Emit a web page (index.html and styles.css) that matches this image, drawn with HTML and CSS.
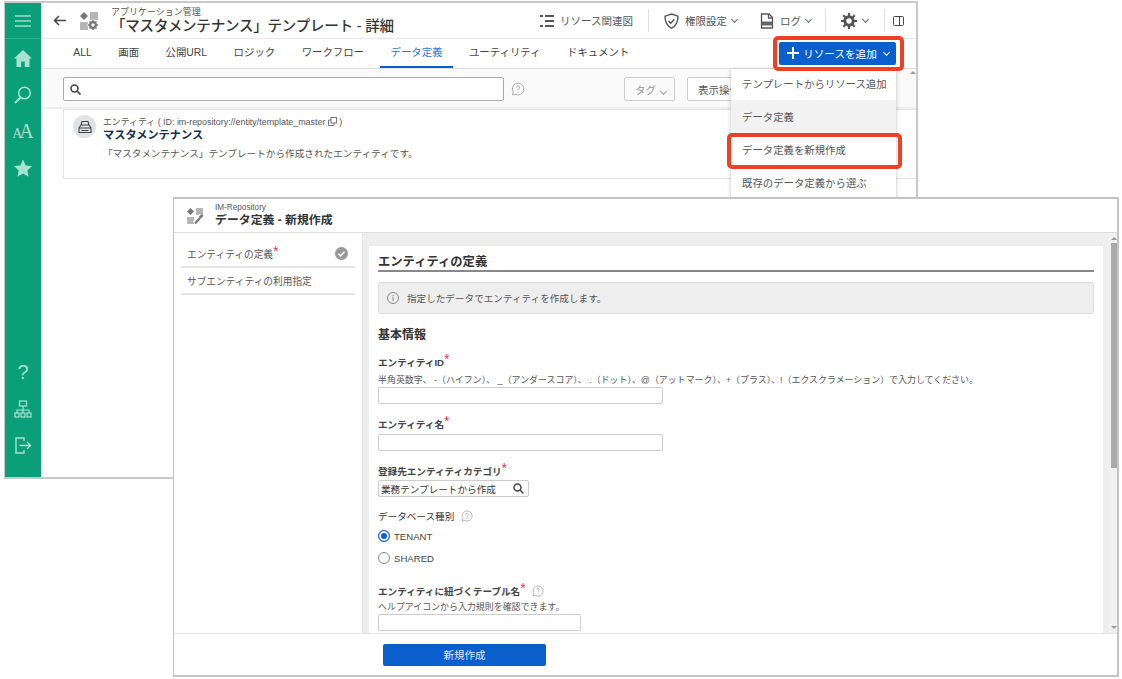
FILE: index.html
```html
<!DOCTYPE html>
<html lang="ja">
<head>
    <meta charset="UTF-8">
    <meta name="viewport" content="width=device-width, initial-scale=1.0">
    <title>データ定義 - 新規作成</title>
    <link rel="stylesheet" href="styles.css">
</head>
<body>
    <!-- 背面のウィンドウ -->
    <div class="window back-window">
        <div class="sidebar">
            <div class="side-top">
                <svg width="18" height="14" viewBox="0 0 18 14"><path d="M1 2h16M1 7h16M1 12h16" stroke="#9fdcc9" stroke-width="1.6"/></svg>
            </div>
            <ul class="side-menu">
                <li><svg width="18" height="17" viewBox="0 0 18 17"><path d="M9 0 0 8.5h2.5V17h4.7v-5.5h3.6V17h4.7V8.5H18z" fill="#a8e2d0"/></svg></li>
                <li><svg width="18" height="18" viewBox="0 0 18 18"><circle cx="10.5" cy="7" r="5.8" fill="none" stroke="#a8e2d0" stroke-width="1.5"/><path d="M6.5 11.5 1 17" stroke="#a8e2d0" stroke-width="2"/></svg></li>
                <li class="side-aa"><span class="aa-text">AA</span></li>
                <li><svg width="18" height="18" viewBox="0 0 18 18"><path d="m9 .5 2.7 5.9 6.3.7-4.7 4.3 1.3 6.3L9 14.5l-5.6 3.2 1.3-6.3L0 7.1l6.3-.7z" fill="#a8e2d0"/></svg></li>
            </ul>
            <ul class="side-menu side-bottom">
                <li class="side-help">?</li>
                <li><svg width="18" height="18" viewBox="0 0 18 18" fill="none" stroke="#a8e2d0" stroke-width="1.2"><rect x="5.5" y="1" width="7" height="5"/><path d="M9 6v4M3 13v-3h12v3M9 10v3"/><rect x="1" y="13" width="4" height="4"/><rect x="7" y="13" width="4" height="4"/><rect x="13" y="13" width="4" height="4"/></svg></li>
                <li><svg width="17" height="17" viewBox="0 0 17 17" fill="none" stroke="#a8e2d0" stroke-width="1.4"><path d="M9 4V1H1v15h8v-3M4.5 8.5h11M12 5l3.500 3.500L12 12"/></svg></li>
            </ul>
        </div>
        <div class="main">
            <div class="app-header">
                <svg class="back-arrow" width="13" height="11" viewBox="0 0 13 11" fill="none" stroke="#444" stroke-width="1.5"><path d="M13 5.5H1.5M6 1 1.5 5.5 6 10"/></svg>
                <svg class="app-icon" width="20" height="20" viewBox="0 0 20 20"><path d="M5 1l4 4-4 4-4-4z" fill="#777"/><rect x="11" y="1" width="8" height="8" fill="#b5b5b5"/><rect x="1" y="11" width="8" height="8" fill="#b5b5b5"/><circle cx="14" cy="14" r="5.5" fill="#fff"/><circle cx="14" cy="14" r="2.8" fill="none" stroke="#777" stroke-width="2.2"/><path d="M14 9v2M14 17v2M9 14h2M17 14h2M10.5 10.5l1.5 1.5M16 16l1.500 1.500M10.5 17.5l1.5-1.5M16 12l1.5-1.5" stroke="#777" stroke-width="1.5"/></svg>
                <div class="app-title">
                    <div class="crumb">アプリケーション管理</div>
                    <h1>「マスタメンテナンス」テンプレート - 詳細</h1>
                </div>
                <div class="tools">
                    <span class="tool tool-first">
                        <svg width="14" height="12" viewBox="0 0 14 12" fill="#555"><path d="M0 0h3v2H0zM0 10h3v2H0zM5 0h9v2H5zM5 5h9v2H5zM5 10h9v2H5z"/></svg>
                        リソース関連図
                    </span>
                    <span class="tool-sep"></span>
                    <span class="tool">
                        <svg width="15" height="16" viewBox="0 0 15 16" fill="none" stroke="#555" stroke-width="1.4"><path d="M7.5 1 14 3.2c0 5.500-1.800 9.600-6.500 12C2.800 12.800 1 8.700 1 3.200z"/><path d="m4.5 8 2.200 2.200 3.800-4"/></svg>
                        権限設定 <i class="chev"></i>
                    </span>
                    <span class="tool tool-log">
                        <svg width="14" height="16" viewBox="0 0 14 16" fill="none" stroke="#555" stroke-width="1.3"><path d="M1.5 15V1h7.500l3.500 3.500V15z"/><path d="M8.5 1v4h4"/><rect x="2" y="8.5" width="10" height="4" fill="#666" stroke="none"/></svg>
                        ログ <i class="chev"></i>
                    </span>
                    <span class="tool-sep"></span>
                    <span class="tool tool-gear">
                        <svg width="16" height="16" viewBox="0 0 16 16"><circle cx="8" cy="8" r="4.2" fill="none" stroke="#555" stroke-width="3"/><path d="M8 0v3M8 13v3M0 8h3M13 8h3M2.3 2.3l2.200 2.200M11.500 11.500l2.200 2.200M2.300 13.700l2.200-2.200M11.500 4.500l2.200-2.200" stroke="#555" stroke-width="2.2"/></svg>
                        <i class="chev"></i>
                    </span>
                    <span class="tool-sep"></span>
                    <svg class="panel-icon" width="11" height="10" viewBox="0 0 11 10" fill="none" stroke="#444"><rect x=".5" y=".5" width="10" height="9" rx="1"/><path d="M6.5 .5v9"/></svg>
                </div>
            </div>
            <div class="tab-bar">
                <ul class="tabs">
                    <li>ALL</li>
                    <li>画面</li>
                    <li>公開URL</li>
                    <li>ロジック</li>
                    <li>ワークフロー</li>
                    <li class="active">データ定義</li>
                    <li>ユーティリティ</li>
                    <li>ドキュメント</li>
                </ul>
                <button class="add-btn">
                    <svg width="12" height="12" viewBox="0 0 12 12"><path d="M6 0v12M0 6h12" stroke="#fff" stroke-width="2"/></svg>
                    リソースを追加
                    <i class="chev chev-white"></i>
                </button>
            </div>
            <div class="filter-bar">
                <div class="search-box">
                    <svg width="11" height="11" viewBox="0 0 11 11" fill="none" stroke="#444" stroke-width="1.6"><circle cx="4.5" cy="4.5" r="3.5"/><path d="m7 7 3.500 3.500"/></svg>
                </div>
                <svg class="help-icon" width="14" height="14" viewBox="0 0 14 14" fill="none" stroke="#aaa"><path d="M7 1a6 6 0 1 1-3 11.200L1.500 13l.8-2.800A6 6 0 0 1 7 1z"/><path d="M5.5 5.500C5.500 3.500 8.500 3.500 8.500 5.500 8.500 6.800 7 6.800 7 8.200M7 9.500v1"/></svg>
                <button class="filter-btn filter-tag">タグ <i class="chev"></i></button>
                <button class="filter-btn">表示操作</button>
            </div>
            <div class="entity-card">
                <div class="entity-avatar">
                    <svg width="14" height="14" viewBox="0 0 14 14" fill="none" stroke="#444" stroke-width="1.1"><path d="M4 1.5h6L11 5H3zM3 5 1 8v4.500h12V8l-2-3M1 8h12M3.500 10.500h7"/></svg>
                </div>
                <div>
                    <div class="entity-meta">エンティティ ( ID: im-repository://entity/template_master <svg width="9" height="9" viewBox="0 0 9 9" fill="none" stroke="#555" stroke-width=".8"><rect x="3" y=".5" width="5.5" height="5.5"/><path d="M3 3H.5v5.500H6V6"/></svg> )</div>
                    <div class="entity-name">マスタメンテナンス</div>
                    <div class="entity-desc">「マスタメンテナンス」テンプレートから作成されたエンティティです。</div>
                </div>
            </div>
        </div>
        <i class="arrow-up back-arrow-up"></i>
        <ul class="add-menu">
            <li>テンプレートからリソース追加</li>
            <li class="menu-group">データ定義</li>
            <li>データ定義を新規作成</li>
            <li>既存のデータ定義から選ぶ</li>
        </ul>
    </div>

    <!-- 前面のウィンドウ -->
    <div class="window front-window">
        <div class="dialog-header">
            <svg width="18" height="18" viewBox="0 0 18 18"><path d="M4.5 1 8 4.500 4.500 8 1 4.500z" fill="#777"/><rect x="10" y="1" width="7" height="7" fill="#b5b5b5"/><rect x="1" y="10" width="7" height="7" fill="#b5b5b5"/><path d="M15.5 8.500 12 12l-3 4.500" stroke="#fff" stroke-width="5" fill="none"/><path d="M16.5 8 15 10l-1.500-1M14 11l-5 5.500" stroke="#777" stroke-width="2.2" fill="none"/></svg>
            <div class="dialog-title">
                <div class="crumb-en">IM-Repository</div>
                <h2>データ定義 - 新規作成</h2>
            </div>
        </div>
        <div class="dialog-body">
            <ul class="step-nav">
                <li class="step-first">
                    <span>エンティティの定義<em class="req">*</em></span>
                    <svg width="13" height="13" viewBox="0 0 13 13"><circle cx="6.5" cy="6.5" r="6.5" fill="#999"/><path d="m3.5 6.800 2.100 2.100 3.900-4.200" fill="none" stroke="#fff" stroke-width="1.5"/></svg>
                </li>
                <li>サブエンティティの利用指定</li>
            </ul>
            <div class="form-area">
                <div class="form-panel">
                    <h3 class="panel-title">エンティティの定義</h3>
                    <div class="info-box">
                        <svg width="12" height="12" viewBox="0 0 12 12" fill="none" stroke="#888"><circle cx="6" cy="6" r="5.5"/><path d="M6 5v4M6 3v1.200"/></svg>
                        指定したデータでエンティティを作成します。
                    </div>
                    <h4 class="section-title">基本情報</h4>

                    <div class="field field-id">
                        <label>エンティティID<em class="req">*</em></label>
                        <p class="hint">半角英数字、 -（ハイフン）、 _（アンダースコア）、 .（ドット）、@（アットマーク）、+（プラス）、!（エクスクラメーション）で入力してください。</p>
                        <div class="input input-wide"></div>
                    </div>
                    <div class="field field-name">
                        <label>エンティティ名<em class="req">*</em></label>
                        <div class="input input-wide"></div>
                    </div>
                    <div class="field field-cat">
                        <label>登録先エンティティカテゴリ<em class="req">*</em></label>
                        <div class="input input-search">
                            <span>業務テンプレートから作成</span>
                            <svg width="11" height="11" viewBox="0 0 11 11" fill="none" stroke="#444" stroke-width="1.5"><circle cx="4.5" cy="4.5" r="3.5"/><path d="m7 7 3.500 3.500"/></svg>
                        </div>
                    </div>
                    <div class="field field-db">
                        <label class="plain">データベース種別 <svg class="help-small" width="12" height="12" viewBox="0 0 14 14" fill="none" stroke="#aaa"><path d="M7 1a6 6 0 1 1-3 11.200L1.500 13l.8-2.800A6 6 0 0 1 7 1z"/><path d="M5.5 5.500C5.500 3.500 8.500 3.500 8.500 5.500 8.500 6.800 7 6.800 7 8.200M7 9.500v1"/></svg></label>
                        <div class="radio-row"><span class="radio checked"></span>TENANT</div>
                        <div class="radio-row"><span class="radio"></span>SHARED</div>
                    </div>
                    <div class="field field-table">
                        <label>エンティティに紐づくテーブル名<em class="req">*</em> <svg class="help-small" width="12" height="12" viewBox="0 0 14 14" fill="none" stroke="#aaa"><path d="M7 1a6 6 0 1 1-3 11.200L1.500 13l.8-2.800A6 6 0 0 1 7 1z"/><path d="M5.5 5.500C5.500 3.500 8.500 3.500 8.500 5.500 8.500 6.800 7 6.800 7 8.200M7 9.500v1"/></svg></label>
                        <p class="hint">ヘルプアイコンから入力規則を確認できます。</p>
                        <div class="input input-table"></div>
                    </div>
                </div>
                <div class="scroll-track">
                    <i class="arrow-up"></i>
                    <div class="scroll-thumb"></div>
                    <i class="arrow-down"></i>
                </div>
            </div>
        </div>
        <div class="dialog-footer">
            <button class="submit-btn">新規作成</button>
        </div>
    </div>

    <div class="highlight highlight-add"></div>
    <div class="highlight highlight-item"></div>
</body>
</html>
```

FILE: styles.css
```css
* {
    margin: 0;
    padding: 0;
    box-sizing: border-box;
    font-family: "Liberation Sans", "Noto Sans CJK JP", sans-serif;
}

body {
    width: 1122px;
    height: 679px;
    overflow: hidden;
    background-color: #fff;
    color: #444;
}

ul {
    list-style: none;
}

em {
    font-style: normal;
}

.window {
    position: absolute;
    background-color: #fff;
}

/* 背面 */
.back-window {
    left: 4px;
    top: 1px;
    width: 914px;
    height: 478px;
    display: flex;
    border: 2px solid #c9c9c9;
    border-left-width: 1px;
}

.sidebar {
    width: 36px;
    flex: none;
    background-color: #0a9f78;
    display: flex;
    flex-direction: column;
    align-items: center;
}

.side-top {
    width: 100%;
    height: 36px;
    display: flex;
    align-items: center;
    justify-content: center;
    border-bottom: 1px solid #2fae8b;
}

.side-menu {
    width: 100%;
    margin-top: 1px;
}

.side-menu li {
    height: 36.5px;
    display: flex;
    align-items: center;
    justify-content: center;
}

.side-bottom {
    margin-top: auto;
    margin-bottom: 13px;
}

.side-aa {
    color: #a8e2d0;
}

.aa-text {
    display: block;
    font-family: "Liberation Serif", serif;
    font-size: 20px;
    letter-spacing: -3px;
    padding-right: 3px;
}

.aa-text::first-letter {
    font-size: 14px;
    font-family: "Liberation Serif", serif;
}

.side-help {
    font-size: 20px;
    color: #a8e2d0;
}

.main {
    flex: 1;
    min-width: 0;
    display: flex;
    flex-direction: column;
}

.app-header {
    height: 36px;
    flex: none;
    display: flex;
    align-items: center;
    padding-left: 12px;
    border-bottom: 1px solid #e8e8e8;
}

.back-arrow {
    margin-right: 13px;
}

.app-icon {
    margin-right: 12px;
}

.crumb {
    font-size: 9px;
    line-height: 10px;
    color: #555;
}

h1 {
    font-size: 14.5px;
    line-height: 18px;
    font-weight: 500;
    color: #333;
    letter-spacing: -0.2px;
}

.tools {
    margin-left: auto;
    display: flex;
    align-items: center;
    font-size: 10.5px;
    color: #555;
}

.tool {
    display: flex;
    align-items: center;
    gap: 6px;
    white-space: nowrap;
}

.tool-log {
    margin-left: 22px;
    margin-right: -2px;
}

.tool-sep {
    width: 1px;
    height: 23px;
    background-color: #ddd;
    margin: 0 15px;
}

.tool-gear {
    gap: 7px;
}

.panel-icon {
    margin-left: -7px;
    margin-right: 12px;
}

.chev {
    display: inline-block;
    width: 5px;
    height: 5px;
    border-right: 1px solid #666;
    border-bottom: 1px solid #666;
    transform: rotate(45deg);
    margin: -2px 1px 0 -1px;
}

.chev-white {
    border-color: #fff;
    margin-left: 3px;
}

.tab-bar {
    height: 30px;
    flex: none;
    display: flex;
    align-items: flex-start;
    justify-content: space-between;
    padding-left: 19px;
    padding-right: 20px;
    border-bottom: 1px solid #ddd;
}

.tabs {
    display: flex;
    height: 29px;
}

.tabs li {
    padding: 0 13.25px;
    font-size: 10.4px;
    line-height: 28px;
    white-space: nowrap;
    color: #444;
}

.tabs .active {
    color: #2677d6;
    padding: 0 11px;
    margin: 0 2.25px;
    border-bottom: 2px solid #0a5fcc;
}

.add-btn {
    width: 117px;
    height: 23px;
    margin-top: 3px;
    padding: 0 0 1px 2px;
    background-color: #0a5fcc;
    color: #fff;
    border: none;
    border-radius: 2px;
    font-size: 10.6px;
    display: flex;
    align-items: center;
    justify-content: center;
    gap: 4px;
}

.filter-bar {
    height: 40px;
    flex: none;
    display: flex;
    align-items: center;
    padding-left: 22px;
    padding-top: 2px;
    background-color: #fafafa;
    border-bottom: 2px solid #eee;
}

.search-box {
    width: 441px;
    height: 24px;
    background-color: #fff;
    border: 1px solid #aaa;
    border-radius: 2px;
    display: flex;
    align-items: center;
    padding-left: 6px;
}

.help-icon {
    margin-left: 7px;
    margin-right: 99px;
}

.filter-btn {
    height: 24px;
    padding: 0 10px;
    margin-right: 12px;
    background-color: #fff;
    border: 1px solid #ccc;
    border-radius: 2px;
    font-size: 10.5px;
    color: #555;
    white-space: nowrap;
}

.filter-tag {
    width: 51px;
    color: #999;
    background-color: #fafafa;
}

.filter-tag .chev {
    margin-left: 2px;
    border-color: #999;
}

.entity-card {
    height: 70px;
    margin-left: 22px;
    padding: 5px 9px;
    display: flex;
    gap: 7px;
    border: 1px solid #e4e4e4;
    border-right: none;
}

.entity-avatar {
    width: 23px;
    height: 23px;
    border-radius: 50%;
    background-color: #dfe3e8;
    display: flex;
    align-items: center;
    justify-content: center;
}

.entity-meta {
    font-size: 8.9px;
    line-height: 10px;
    margin-top: 2px;
    color: #555;
}

.entity-meta svg {
    vertical-align: -1px;
}

.entity-name {
    font-size: 11.2px;
    line-height: 16px;
    font-weight: bold;
    color: #12304d;
}

.entity-desc {
    font-size: 9.65px;
    line-height: 14px;
    margin-top: 4px;
    color: #555;
}

.back-arrow-up {
    position: absolute;
    left: 905px;
    top: 68px;
}

.add-menu {
    position: absolute;
    left: 726px;
    top: 66px;
    width: 165px;
    height: 129px;
    overflow: hidden;
    background-color: #fff;
    box-shadow: 0 1px 4px rgba(0,0,0,0.25);
    font-size: 10.4px;
    color: #555;
}

.add-menu li {
    height: 33px;
    line-height: 33px;
    padding: 1px 0 0 11px;
    white-space: nowrap;
}

.add-menu li:first-child {
    height: 31px;
    line-height: 31px;
    padding-top: 0;
}

.menu-group {
    background-color: #f2f2f2;
}

/* 前面 */
.front-window {
    left: 173px;
    top: 197px;
    width: 946px;
    height: 480px;
    display: flex;
    flex-direction: column;
    border: 2px solid #c4c4c4;
    border-left-width: 1px;
}

.dialog-header {
    height: 34px;
    flex: none;
    display: flex;
    align-items: center;
    gap: 11px;
    padding-left: 12px;
    border-bottom: 1px solid #ddd;
}

.crumb-en {
    font-size: 8.2px;
    line-height: 9px;
    color: #555;
}

h2 {
    font-size: 11.9px;
    line-height: 17px;
    color: #333;
}

.dialog-body {
    flex: 1;
    min-height: 0;
    display: flex;
}

.step-nav {
    width: 189px;
    flex: none;
    padding: 0 7px;
    border-right: 1px solid #e4e4e4;
    font-size: 9.7px;
    color: #555;
}

.step-nav li {
    height: 27px;
    display: flex;
    align-items: center;
    justify-content: space-between;
    padding: 1px 7px 0 6px;
    border-bottom: 2px solid #e4e4e4;
}

.step-nav .step-first {
    height: 35px;
    padding-top: 8px;
}

.req {
    color: #e8325a;
    font-size: 14px;
    line-height: 8px;
    vertical-align: 2px;
    font-weight: normal;
}

.form-area {
    flex: 1;
    min-width: 0;
    display: flex;
    background-color: #eee;
    padding: 13px 0 0 6px;
    overflow: hidden;
}

.form-panel {
    width: 734px;
    flex: none;
    background-color: #fff;
    padding: 0 9px;
}

.panel-title {
    height: 26px;
    font-size: 12.3px;
    line-height: 32px;
    color: #333;
    border-bottom: 2px solid #888;
}

.info-box {
    height: 32px;
    margin-top: 10px;
    display: flex;
    align-items: center;
    gap: 8px;
    padding-left: 8px;
    background-color: #eee;
    border: 1px solid #ddd;
    border-radius: 3px;
    font-size: 9.6px;
    color: #555;
}

.section-title {
    font-size: 12px;
    line-height: 16px;
    margin-top: 13px;
    color: #333;
}

.field {
    font-size: 9.6px;
}

.field label {
    display: block;
    line-height: 14px;
    font-weight: bold;
    color: #444;
}

.field .plain {
    font-weight: normal;
    color: #333;
}

.help-small {
    vertical-align: -2px;
    margin-left: 4px;
}

.field-id {
    margin-top: 12px;
}

.field-name {
    margin-top: 13px;
}

.field-cat {
    margin-top: 13px;
}

.field-db {
    margin-top: 13px;
}

.field-table {
    margin-top: 15px;
}

.hint {
    font-size: 8.95px;
    line-height: 12px;
    margin-top: 4px;
    margin-bottom: 1px;
    color: #555;
    white-space: nowrap;
}

.field-table .hint {
    margin-top: 2px;
    margin-bottom: 1px;
}

.input {
    height: 17px;
    background-color: #fff;
    border: 1px solid #ccc;
    border-radius: 2px;
}

.input-wide {
    width: 285px;
}

.field-name .input {
    margin-top: 2px;
}

.input-search {
    width: 151px;
    margin-top: 1px;
    display: flex;
    align-items: center;
    justify-content: space-between;
    padding: 0 4px 0 2px;
    font-size: 9.6px;
    color: #333;
}

.input-table {
    width: 203px;
}

.radio-row {
    height: 22px;
    display: flex;
    align-items: center;
    gap: 4px;
    font-size: 9.6px;
    color: #444;
}

.field-db label {
    margin-bottom: 1px;
}

.radio {
    width: 12px;
    height: 12px;
    border-radius: 50%;
    border: 1px solid #888;
    background-color: #fff;
}

.radio.checked {
    border-color: #0a5fcc;
    background-color: #0a5fcc;
    box-shadow: inset 0 0 0 2px #fff;
}

.scroll-track {
    width: 9px;
    flex: none;
    margin-left: 6px;
    margin-top: -13px;
    background-color: #f1f1f1;
    display: flex;
    flex-direction: column;
    align-items: center;
    padding: 4px 0;
}

.scroll-thumb {
    width: 6px;
    height: 225px;
    margin-top: 3px;
    background-color: #aaa;
}

.arrow-up,
.arrow-down {
    width: 0;
    height: 0;
    border-left: 3px solid transparent;
    border-right: 3px solid transparent;
}

.arrow-up {
    border-bottom: 3px solid #999;
}

.arrow-down {
    border-top: 3px solid #999;
    margin-top: auto;
}

.dialog-footer {
    height: 42px;
    flex: none;
    padding: 10px 0 0 209px;
    background-color: #fff;
    border-top: 1px solid #e4e4e4;
}

.submit-btn {
    width: 163px;
    height: 22px;
    padding-bottom: 1px;
    background-color: #0a5fcc;
    color: #dfe9f7;
    border: none;
    border-radius: 2px;
    font-size: 10.5px;
}

/* 赤枠の注釈 */
.highlight {
    position: absolute;
    border: 4px solid #f04023;
    border-radius: 5px;
}

.highlight-add {
    left: 773px;
    top: 36px;
    width: 131px;
    height: 35px;
}

.highlight-item {
    left: 727px;
    top: 133px;
    width: 175px;
    height: 36px;
}
```
